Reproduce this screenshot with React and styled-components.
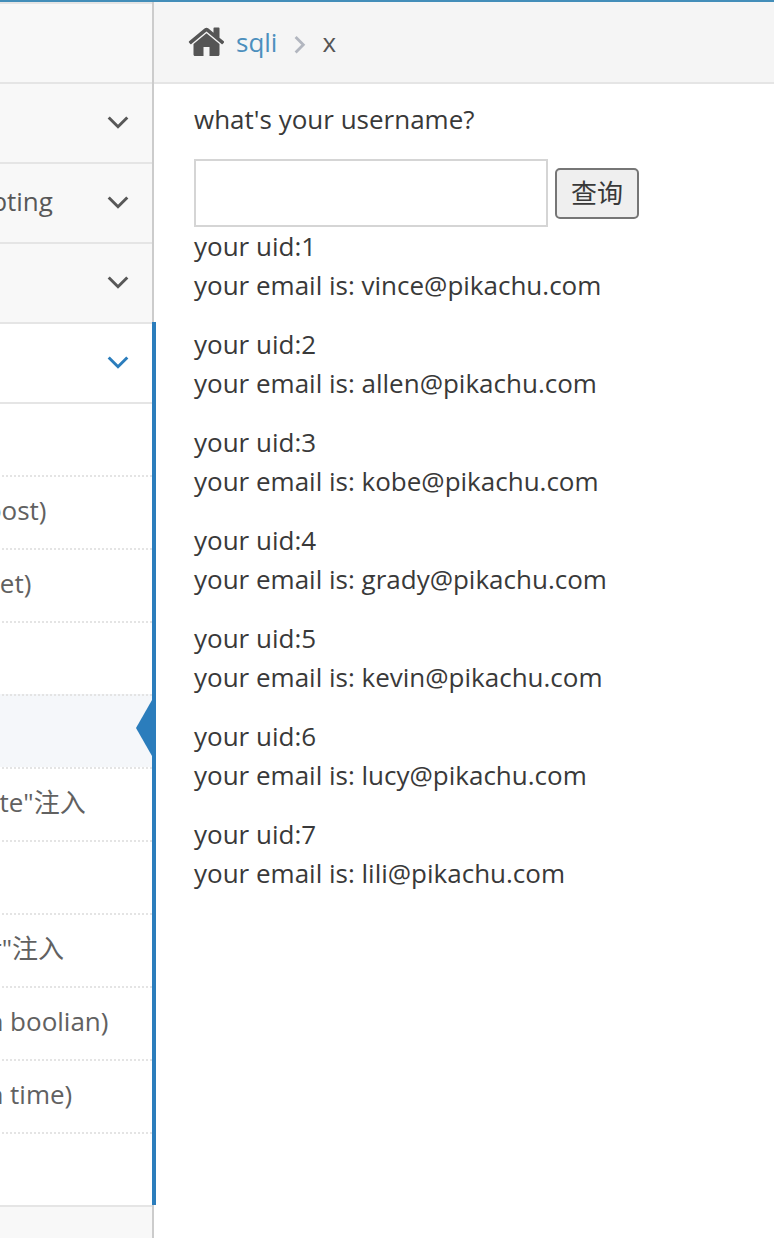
import React, { useState } from "react";
import styled, { createGlobalStyle } from "styled-components";

const GlobalStyle = createGlobalStyle`
  *, *::before, *::after {
    box-sizing: border-box;
  }

  body {
    margin: 0;
    overflow-x: hidden;
    background-color: #fff;
    color: #393939;
    font-family: "Open Sans", "Noto Sans CJK SC", sans-serif;
    font-size: 26px;
    line-height: 39px;
  }
`;

const Page = styled.div`
  display: flex;
  flex-direction: column;
  min-height: 100vh;
  border-top: 2px solid #438eb9;
  overflow: hidden;
`;

const Columns = styled.div`
  display: flex;
  flex: 1;
`;

const Sidebar = styled.nav`
  flex: none;
  width: 380px;
  margin-left: -226px;
  background-color: #f8f8f8;
  border-right: 2px solid #ccc;
`;

const Menu = styled.ul`
  list-style: none;
  margin: 0;
  padding: 0;
`;

const MenuItem = styled.li`
  position: relative;
  border-top: 2px solid #e5e5e5;

  ${({ $open }) =>
    $open &&
    `
    &::after {
      content: "";
      position: absolute;
      top: -2px;
      right: -4px;
      bottom: 0;
      width: 4px;
      background-color: #2b7dbc;
    }
  `}
`;

const MenuButton = styled.button`
  display: flex;
  align-items: center;
  justify-content: space-between;
  width: 100%;
  height: 78px;
  padding: 0 23px 3px 46px;
  border: none;
  background-color: ${({ $open }) => ($open ? "#fff" : "#f8f8f8")};
  color: ${({ $open }) => ($open ? "#2b7dbc" : "#585858")};
  font: inherit;
  text-align: left;
  cursor: pointer;
`;

const Submenu = styled.ul`
  list-style: none;
  margin: 0;
  padding: 0;
  border-top: 2px solid #e5e5e5;
  background-color: #fff;
`;

const SubmenuItem = styled.li`
  position: relative;
  background-color: ${({ $active }) => ($active ? "#f5f7fa" : "#fff")};

  & + & {
    border-top: 2px dotted #e4e4e4;
  }

  ${({ $active }) =>
    $active &&
    `
    &::after {
      content: "";
      position: absolute;
      top: 4px;
      right: 0;
      border: solid transparent;
      border-width: 28px 16px 28px 0;
      border-right-color: #2b7dbc;
    }
  `}
`;

const SubmenuLink = styled.a`
  display: flex;
  align-items: center;
  height: 71px;
  padding: 0 0 4px 74px;
  color: #616161;
  text-decoration: none;
  white-space: nowrap;
`;

const Main = styled.main`
  flex: 1;
  min-width: 0;
`;

const Breadcrumbs = styled.nav`
  display: flex;
  align-items: center;
  height: 82px;
  padding: 0 34px;
  background-color: #f5f5f5;
  border-bottom: 2px solid #e5e5e5;
`;

const CrumbLink = styled.a`
  margin: 0 17px 0 12px;
  color: #4c8fbd;
  text-decoration: none;
`;

const Crumb = styled.span`
  margin-left: 16px;
  color: #555;
`;

const Content = styled.div`
  padding: 16px 40px;
`;

const Prompt = styled.label`
  display: block;
  margin-bottom: 20px;
`;

const SearchForm = styled.form`
  display: flex;
  align-items: center;
  gap: 7px;
`;

const TextInput = styled.input`
  width: 354px;
  min-width: 0;
  height: 68px;
  padding: 10px 8px;
  border: 2px solid #d5d5d5;
  border-radius: 0;
  background-color: #fff;
  color: #858585;
  font: inherit;
`;

const SubmitButton = styled.button`
  flex: none;
  height: 51px;
  padding: 0 14px;
  border: 2px solid #767676;
  border-radius: 5px;
  background-color: #efefef;
  color: #393939;
  font: inherit;
  cursor: pointer;
`;

const Result = styled.p`
  margin: 0 0 20px;
`;

const AngleDown = () => (
  <svg width="22" height="14" viewBox="0 0 22 14" aria-hidden="true">
    <path d="M1.7 2.500 11 11.700l9.300-9.200" fill="none" stroke="currentColor" strokeWidth="3" />
  </svg>
);

const AngleRight = () => (
  <svg width="12" height="24" viewBox="0 0 12 24" aria-hidden="true">
    <path d="M1.600 7 9.300 14.800 1.600 22.600" fill="none" stroke="#b2b6bf" strokeWidth="2.8" />
  </svg>
);

const HomeIcon = () => (
  <svg width="36" height="30" viewBox="0 0 36 30" aria-hidden="true">
    <path
      fill="#555"
      d="M18.500 6.200 31.500 17v10.500c0 .9-.6 1.500-1.500 1.500h-8.500v-9h-6v9H7c-.9 0-1.500-.6-1.500-1.500V17z"
    />
    <path
      fill="#555"
      d="M35.800 14.300 31.500 10.700V1.200c0-.5-.3-.8-.8-.8h-4.400c-.5 0-.8.3-.8.8v4.500l-5-4.200c-1.200-1-2.800-1-4 0L1.100 14.300c-.3.3-.4.8-.1 1.100l1.300 1.600c.3.300.7.4 1.100.1L18.500 4.500l15.100 12.600c.4.300.8.200 1.100-.1l1.300-1.600c.2-.3.100-.8-.2-1.100z"
    />
  </svg>
);

const sqliItems = [
  "",
  "数字型注入(post)",
  "字符型注入(get)",
  "",
  "",
  '"insert/update"注入',
  "",
  '"http header"注入',
  "盲注(base on boolian)",
  "盲注(base on time)",
  "",
];

const sections = [
  { id: "overview", title: "" },
  { id: "brute", title: "", arrow: true },
  { id: "xss", title: "Cross-Site Scripting", arrow: true },
  { id: "csrf", title: "", arrow: true },
  { id: "sqli", title: "", arrow: true, items: sqliItems, active: 4 },
  { id: "rce", title: "", arrow: true },
];

const results = [
  { uid: 1, email: "vince@pikachu.com" },
  { uid: 2, email: "allen@pikachu.com" },
  { uid: 3, email: "kobe@pikachu.com" },
  { uid: 4, email: "grady@pikachu.com" },
  { uid: 5, email: "kevin@pikachu.com" },
  { uid: 6, email: "lucy@pikachu.com" },
  { uid: 7, email: "lili@pikachu.com" },
];

function App() {
  const [openId, setOpenId] = useState("sqli");
  const [name, setName] = useState("");

  return (
    <Page>
      <GlobalStyle />
      <Columns>
        <Sidebar>
          <Menu>
            {sections.map(({ id, title, arrow, items, active }) => {
              const open = openId === id;
              return (
                <MenuItem key={id} $open={open}>
                  <MenuButton
                    type="button"
                    $open={open}
                    aria-expanded={open}
                    onClick={() => setOpenId(open ? null : id)}
                  >
                    <span>{title}</span>
                    {arrow && <AngleDown />}
                  </MenuButton>
                  {open && items && (
                    <Submenu>
                      {items.map((item, index) => (
                        <SubmenuItem key={index} $active={index === active}>
                          <SubmenuLink href="#">{item}</SubmenuLink>
                        </SubmenuItem>
                      ))}
                    </Submenu>
                  )}
                </MenuItem>
              );
            })}
          </Menu>
        </Sidebar>
        <Main>
          <Breadcrumbs>
            <HomeIcon />
            <CrumbLink href="#">sqli</CrumbLink>
            <AngleRight />
            <Crumb>x</Crumb>
          </Breadcrumbs>
          <Content>
            <Prompt htmlFor="name">what's your username?</Prompt>
            <SearchForm onSubmit={(e) => e.preventDefault()}>
              <TextInput
                id="name"
                type="text"
                value={name}
                onChange={(e) => setName(e.target.value)}
              />
              <SubmitButton type="submit">查询</SubmitButton>
            </SearchForm>
            {results.map(({ uid, email }) => (
              <Result key={uid}>
                your uid:{uid}
                <br />
                your email is: {email}
              </Result>
            ))}
          </Content>
        </Main>
      </Columns>
    </Page>
  );
}

export default App;
